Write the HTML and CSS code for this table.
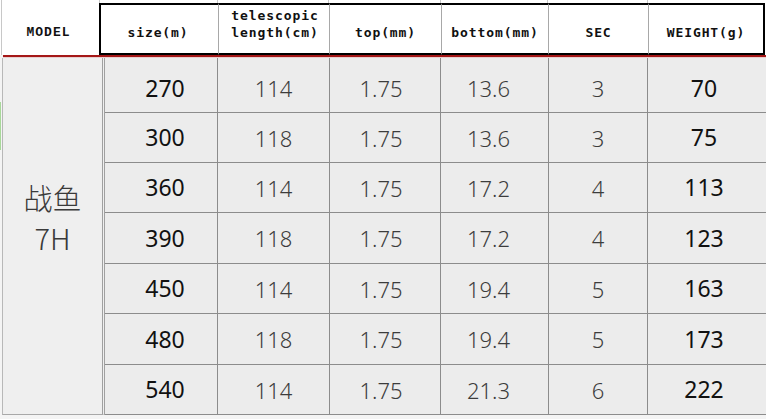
FILE: index.html
```html
<!DOCTYPE html>
<html lang="zh">
<head>
<meta charset="utf-8">
<title>战鱼 7H</title>
<link rel="stylesheet" href="styles.css">
</head>
<body>
<div class="sheet">
  <div class="strip">
    <span></span><span></span><span></span><span></span><span></span><span></span><span></span>
  </div>
  <div class="head">
    <div class="hc model-h">MODEL</div>
    <div class="hc box first">size(m)</div>
    <div class="hc box two">telescopic<br>length(cm)</div>
    <div class="hc box">top(mm)</div>
    <div class="hc box">bottom(mm)</div>
    <div class="hc box">SEC</div>
    <div class="hc box last">WEIGHT(g)</div>
  </div>
  <div class="redline"></div>
  <div class="grid">
    <div class="model">战鱼<br>7H</div>

    <div class="c size r1">270</div><div class="c lt r1 bl">114</div><div class="c lt top r1 bl">1.75</div><div class="c lt bot r1 bl">13.6</div><div class="c lt r1 bl">3</div><div class="c wt r1 bl">70</div>
    <div class="c size">300</div><div class="c lt bl">118</div><div class="c lt top bl">1.75</div><div class="c lt bot bl">13.6</div><div class="c lt bl">3</div><div class="c wt bl">75</div>
    <div class="c size">360</div><div class="c lt bl">114</div><div class="c lt top bl">1.75</div><div class="c lt bot bl">17.2</div><div class="c lt bl">4</div><div class="c wt bl">113</div>
    <div class="c size">390</div><div class="c lt bl">118</div><div class="c lt top bl">1.75</div><div class="c lt bot bl">17.2</div><div class="c lt bl">4</div><div class="c wt bl">123</div>
    <div class="c size">450</div><div class="c lt bl">114</div><div class="c lt top bl">1.75</div><div class="c lt bot bl">19.4</div><div class="c lt bl">5</div><div class="c wt bl">163</div>
    <div class="c size">480</div><div class="c lt bl">118</div><div class="c lt top bl">1.75</div><div class="c lt bot bl">19.4</div><div class="c lt bl">5</div><div class="c wt bl">173</div>
    <div class="c size">540</div><div class="c lt bl">114</div><div class="c lt top bl">1.75</div><div class="c lt bot bl">21.3</div><div class="c lt bl">6</div><div class="c wt bl">222</div>
  </div>
</div>
</body>
</html>
```

FILE: styles.css
```css
* { box-sizing: border-box; }
html, body { margin: 0; padding: 0; }
body {
  width: 766px;
  height: 419px;
  background: #f4f4f4;
  overflow: hidden;
}
.sheet {
  position: relative;
  width: 766px;
}
.sheet::before {
  content: "";
  position: absolute;
  left: 0;
  top: 102px;
  width: 1px;
  height: 48px;
  background: #a8d89a;
}

/* top strip above header */
.strip {
  display: grid;
  grid-template-columns: 100px 118px 111px 112px 107px 100px 118px;
  height: 3px;
  background: #fff;
}
.strip span { border-right: 1px solid #c8c8c8; }
.strip span:first-child { border-left: 1px solid #c8c8c8; margin-left: 1px; }
.strip span:last-child { border-right: 0; }

/* header */
.head {
  display: grid;
  grid-template-columns: 99px 119px 111px 112px 107px 100px 118px;
  height: 52px;
  background: #fff;
}
.hc {
  display: flex;
  align-items: center;
  justify-content: center;
  padding-top: 7px;
  font-family: "DejaVu Sans Mono", "Liberation Mono", monospace;
  font-weight: bold;
  font-size: 13px;
  letter-spacing: 0.9px;
  color: #111;
  text-align: center;
  line-height: 17px;
}
.model-h {
  margin-left: 1px;
  border-left: 1px solid #c8c8c8;
  font-family: "Liberation Mono", monospace;
  font-size: 13px;
  letter-spacing: 1px;
  padding-right: 4px;
}
.box {
  border-top: 2px solid #000;
  border-bottom: 2px solid #000;
  border-left: 1px solid #a8a8a8;
}
.box.first { border-left: 2px solid #000; padding-right: 3px; }
.box.last { border-right: 2px solid #000; margin-right: 1px; }
.box.two {
  align-items: flex-start;
  padding-top: 2px;
  padding-left: 2px;
}

.redline {
  height: 3px;
  margin-left: 3px;
  border-top: 2px solid #a51717;
  background: #e9cfcf;
}

/* body */
.grid {
  display: grid;
  grid-template-columns: 103px 112px 112px 111px 108px 99px 119px;
  grid-template-rows: 55px 50px 50px 51px 50px 51px 50px;
  background: #ececec;
  height: 357px;
  margin-left: 2px;
  width: 764px;
}
.model {
  grid-row: 1 / span 7;
  grid-column: 1;
  border-left: 1px solid #b8b8b8;
  border-right: 3px double #a0a0a0;
  border-bottom: 1px solid #a8a8a8;
  display: flex;
  align-items: center;
  justify-content: center;
  text-align: center;
  padding-bottom: 38px;
  font-family: "Noto Sans CJK SC", "Noto Sans", sans-serif;
  font-weight: 300;
  font-size: 29px;
  line-height: 40px;
  color: #3a3a3a;
  background: #efefef;
}
.c {
  display: flex;
  align-items: center;
  justify-content: center;
  border-bottom: 1px solid #8c8c8c;
  font-family: "Noto Sans", sans-serif;
  font-size: 23px;
  line-height: 1;
}
.c.r1 { padding-top: 6px; }
.bl { border-left: 1px solid #8c8c8c; }
.size {
  color: #111;
  padding-left: 8px;
}
.wt {
  color: #111;
  padding-right: 6px;
}
.lt {
  color: #3c3c3c;
  font-weight: 300;
  font-size: 22px;
}
.lt.top { padding-right: 8px; }
.lt.bot { padding-right: 12px; }
```
